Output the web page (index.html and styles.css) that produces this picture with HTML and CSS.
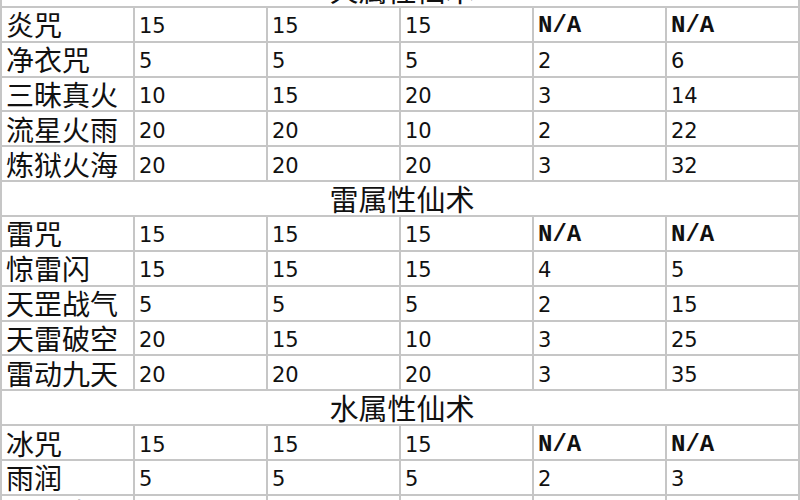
FILE: index.html
```html
<!DOCTYPE html>
<html lang="zh">
<head>
<meta charset="utf-8">
<link rel="stylesheet" href="styles.css">
</head>
<body>
<table class="grid">
  <colgroup>
    <col class="c"><col class="c"><col class="c"><col class="c"><col class="c"><col class="c">
  </colgroup>
  <tbody>
    <tr class="sec"><td colspan="6">火属性仙术</td></tr>
    <tr><td class="name">炎咒</td><td class="num">15</td><td class="num">15</td><td class="num">15</td><td class="na">N/A</td><td class="na">N/A</td></tr>
    <tr><td class="name">净衣咒</td><td class="num">5</td><td class="num">5</td><td class="num">5</td><td class="num">2</td><td class="num">6</td></tr>
    <tr><td class="name">三昧真火</td><td class="num">10</td><td class="num">15</td><td class="num">20</td><td class="num">3</td><td class="num">14</td></tr>
    <tr><td class="name">流星火雨</td><td class="num">20</td><td class="num">20</td><td class="num">10</td><td class="num">2</td><td class="num">22</td></tr>
    <tr><td class="name">炼狱火海</td><td class="num">20</td><td class="num">20</td><td class="num">20</td><td class="num">3</td><td class="num">32</td></tr>
    <tr class="sec"><td colspan="6">雷属性仙术</td></tr>
    <tr><td class="name">雷咒</td><td class="num">15</td><td class="num">15</td><td class="num">15</td><td class="na">N/A</td><td class="na">N/A</td></tr>
    <tr><td class="name">惊雷闪</td><td class="num">15</td><td class="num">15</td><td class="num">15</td><td class="num">4</td><td class="num">5</td></tr>
    <tr><td class="name">天罡战气</td><td class="num">5</td><td class="num">5</td><td class="num">5</td><td class="num">2</td><td class="num">15</td></tr>
    <tr><td class="name">天雷破空</td><td class="num">20</td><td class="num">15</td><td class="num">10</td><td class="num">3</td><td class="num">25</td></tr>
    <tr><td class="name">雷动九天</td><td class="num">20</td><td class="num">20</td><td class="num">20</td><td class="num">3</td><td class="num">35</td></tr>
    <tr class="sec"><td colspan="6">水属性仙术</td></tr>
    <tr><td class="name">冰咒</td><td class="num">15</td><td class="num">15</td><td class="num">15</td><td class="na">N/A</td><td class="na">N/A</td></tr>
    <tr><td class="name">雨润</td><td class="num">5</td><td class="num">5</td><td class="num">5</td><td class="num">2</td><td class="num">3</td></tr>
    <tr><td class="name">漫天冰雨</td><td class="num">20</td><td class="num">20</td><td class="num">20</td><td class="num">3</td><td class="num">25</td></tr>
  </tbody>
</table>
</body>
</html>
```
FILE: styles.css
```css
html, body {
  margin: 0;
  padding: 0;
  background: #ffffff;
  overflow: hidden;
}

.grid {
  border-collapse: collapse;
  table-layout: fixed;
  width: 797px;
  margin-top: -29px;
  color: #111111;
}

.c {
  width: 133px;
}

.grid td {
  border: 2px solid #c6c6c6;
  height: 34.86px;
  padding: 0 0 0 4px;
  box-sizing: border-box;
  vertical-align: middle;
  white-space: nowrap;
  overflow: hidden;
}

.name {
  font-family: "Noto Sans CJK SC", sans-serif;
  font-size: 28px;
  line-height: 1;
}

.num {
  font-family: "DejaVu Sans", sans-serif;
  font-size: 21px;
  line-height: 1;
  padding-top: 5px !important;
}

.na {
  font-family: "Liberation Mono", monospace;
  font-size: 24px;
  font-weight: bold;
  line-height: 1;
  padding-top: 4px !important;
}

.sec td {
  font-family: "Noto Sans CJK SC", sans-serif;
  font-size: 29px;
  line-height: 1;
  text-align: center;
}
```
